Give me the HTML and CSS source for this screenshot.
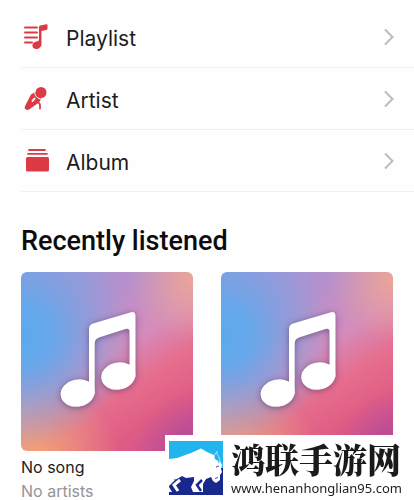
FILE: index.html
```html
<!DOCTYPE html>
<html lang="en">
<head>
  <meta charset="UTF-8" />
  <meta name="viewport" content="width=device-width, initial-scale=1.0" />
  <title>Music Library</title>
  <link rel="stylesheet" href="styles.css">
</head>
<body>
  <nav class="menu">
    <a class="menu-item" href="#playlist">
      <svg class="menu-icon" viewBox="0 0 28 28">
        <path d="M4 4.500h12M4 9.500h12M4 14.500h12M4 19.500h7" stroke="currentColor" stroke-width="2" stroke-linecap="round" />
        <path d="M18 4.200q0-1.400 1.300-1.700l6-1.300q1.200-.2 1.200 1v3.200q0 1.200-1.200 1.500L20.500 8v12.800c0 3.200-2.500 5.300-5.200 5.300-2.300 0-3.900-1.300-3.900-3.500 0-2.200 1.600-3.500 4-4 2-.4 2.600-.8 2.600-2z" fill="currentColor" />
      </svg>
      <span class="menu-label">Playlist</span>
      <svg class="chevron" viewBox="0 0 10 18"><path d="M1 1.500 8.500 9 1 16.500" /></svg>
    </a>
    <a class="menu-item" href="#artist">
      <svg class="menu-icon" viewBox="0 0 28 28">
        <path d="M10 9.500 14 7l6.500 6.500-2.500 4L8.500 24.300q-2.500 1.200-4 0-1.400-1.500-.2-3.800z" fill="currentColor" />
        <circle cx="20" cy="7.500" r="5.500" fill="currentColor" />
        <path d="M13.500 6.500c.3 4.600 3 7.300 7.500 7.700" fill="none" stroke="#fff" stroke-width="1" />
        <path d="M11.500 16l2-2.500" stroke="#fff" stroke-width="2" stroke-linecap="round" />
        <path d="M17 17.500q2 .5 2 3v3" fill="none" stroke="currentColor" stroke-width="1.800" stroke-linecap="round" />
      </svg>
      <span class="menu-label">Artist</span>
      <svg class="chevron" viewBox="0 0 10 18"><path d="M1 1.500 8.500 9 1 16.500" /></svg>
    </a>
    <a class="menu-item" href="#album">
      <svg class="menu-icon" viewBox="0 0 28 28">
        <path d="M8 3h16M7 6.800h19" stroke="currentColor" stroke-width="1.800" stroke-linecap="round" />
        <rect x="5" y="10" width="23" height="14.500" rx="1.500" fill="currentColor" />
      </svg>
      <span class="menu-label">Album</span>
      <svg class="chevron" viewBox="0 0 10 18"><path d="M1 1.500 8.500 9 1 16.500" /></svg>
    </a>
  </nav>

  <section class="recent">
    <h2>Recently listened</h2>
    <div class="covers">
      <div class="track">
        <svg class="cover" viewBox="0 0 172 179">
          <g class="note">
            <path d="M68 57q0-4 4-5.400L110 40.200q4.500-1 4.500 4V105h-6V60q0-4-4-3L78 65.500q-4.300 1.500-4.300 6V122H68z" />
            <ellipse cx="56.700" cy="121" rx="17.200" ry="13.600" transform="rotate(-12 56.700 121)" />
            <ellipse cx="97.300" cy="104" rx="17.200" ry="13.600" transform="rotate(-12 97.300 104)" />
          </g>
        </svg>
        <p class="song">No song</p>
        <p class="artist">No artists</p>
      </div>
      <div class="track">
        <svg class="cover" viewBox="0 0 172 179">
          <g class="note">
            <path d="M68 57q0-4 4-5.400L110 40.200q4.500-1 4.500 4V105h-6V60q0-4-4-3L78 65.500q-4.300 1.500-4.300 6V122H68z" />
            <ellipse cx="56.700" cy="121" rx="17.200" ry="13.600" transform="rotate(-12 56.700 121)" />
            <ellipse cx="97.300" cy="104" rx="17.200" ry="13.600" transform="rotate(-12 97.300 104)" />
          </g>
        </svg>
      </div>
    </div>
  </section>

  <aside class="site-badge">
    <svg class="site-logo" viewBox="0 0 54 54">
      <rect width="54" height="27" fill="#22b4ee" />
      <rect y="27" width="54" height="27" fill="#18288c" />
      <!-- bison -->
      <path d="M0 18 8 17 22 12 32 7.500 38 11 45 14 47 18 51 20 53 24 52 28 53 31 51 34 51 39 47 42 44 40 42 36 37 38 34 43 34 51H24L22 46 25 40 25 36 17 37 13 35 8 38 0 40z" fill="#fff" />
      <path d="M48 10.500q-4 4-2.500 7 1 2 3.500 2.500v3.500q3.500-3.500 1-7.500-2.500-2.500-2-5.500z" fill="#22b4ee" stroke="#fff" stroke-width=".6" />
      <path d="M47 26l3-1M46 37.500l3-1" stroke="#18288c" stroke-width=".8" />
      <!-- legs -->
      <path d="M33 39 28 44 32 50" fill="none" stroke="#18288c" stroke-width="2.500" />
      <path d="M11 39 5 44 9 50" fill="none" stroke="#fff" stroke-width="3" />
      <path d="M6 39 0 45V38z" fill="#fff" />
      <path d="M0 46l3 5H0z" fill="#fff" />
    </svg>
    <div class="site-text">
      <p class="site-name" lang="zh-CN">鸿联手游网</p>
      <p class="site-url">www.henanhonglian95.com</p>
    </div>
  </aside>
</body>
</html>
```

FILE: styles.css
```css
body {
  margin: 0;
  padding: 6px 0 0;
  font-family: Inter, "Liberation Sans", sans-serif;
  background: #fefefe;
  color: #1c1c1e;
}

h2,
p {
  margin: 0;
}

.menu {
  padding-left: 21px;
}

.menu-item {
  display: flex;
  align-items: center;
  box-sizing: border-box;
  height: 62px;
  padding-right: 20px;
  border-bottom: 1px solid #f0f0f0;
  color: inherit;
  text-decoration: none;
}

.menu-icon {
  width: 28px;
  height: 28px;
  margin-right: 17px;
  color: #dc3b45;
}

.menu-label {
  flex: 1;
  padding-top: 4px;
  font-size: 21px;
  line-height: 28px;
}

.chevron {
  width: 10px;
  height: 18px;
  fill: none;
  stroke: #bcbcbf;
  stroke-width: 2;
}

.recent {
  padding: 33px 21px 0;
}

.recent h2 {
  font-family: Roboto, Inter, sans-serif;
  font-size: 27px;
  font-weight: 500;
  line-height: 32px;
  color: #0c0c0d;
}

.covers {
  display: grid;
  grid-template-columns: 1fr 1fr;
  gap: 28px;
  margin-top: 15px;
}

.cover {
  display: block;
  width: 100%;
  border-radius: 6px;
  background:
    radial-gradient(circle at 0% 36%, #5caaee 0%, #5caaeee6 14%, #5caaee80 30%, #5caaee00 54%),
    radial-gradient(circle at 100% 4%, #eba598 0%, #eba59800 26%),
    radial-gradient(circle at 6% 110%, #f2ac76 0%, #f2ac7600 36%),
    radial-gradient(circle at 106% 106%, #a8449f 0%, #a8449f00 28%),
    linear-gradient(148deg, #9c98d8 0%, #b890cc 28%, #d48cbc 48%, #e66e8e 64%, #df5d84 80%, #d05490 100%);
}

.note {
  fill: #fff;
  filter: drop-shadow(0 1px 3px rgba(50, 30, 80, 0.5));
}

.song,
.artist {
  font-size: 16px;
}

.song {
  padding: 4px 0;
  line-height: 24px;
}

.artist {
  line-height: 16px;
  color: #949496;
}

/* sits over the lower right corner of the page */
.site-badge {
  position: fixed;
  right: 0;
  bottom: 0;
  display: flex;
  align-items: center;
  gap: 8px;
  box-sizing: border-box;
  height: 65px;
  padding: 0 12px 0 4px;
  background: #fff;
}

.site-logo {
  width: 54px;
  height: 54px;
}

.site-name {
  font-family: "Noto Serif CJK SC", "Noto Sans CJK SC", serif;
  font-size: 34px;
  font-weight: 900;
  line-height: 40px;
  color: #1a1a1a;
}

.site-url {
  font-family: "Noto Sans", sans-serif;
  font-size: 13px;
  line-height: 18px;
  color: #222;
}
```
